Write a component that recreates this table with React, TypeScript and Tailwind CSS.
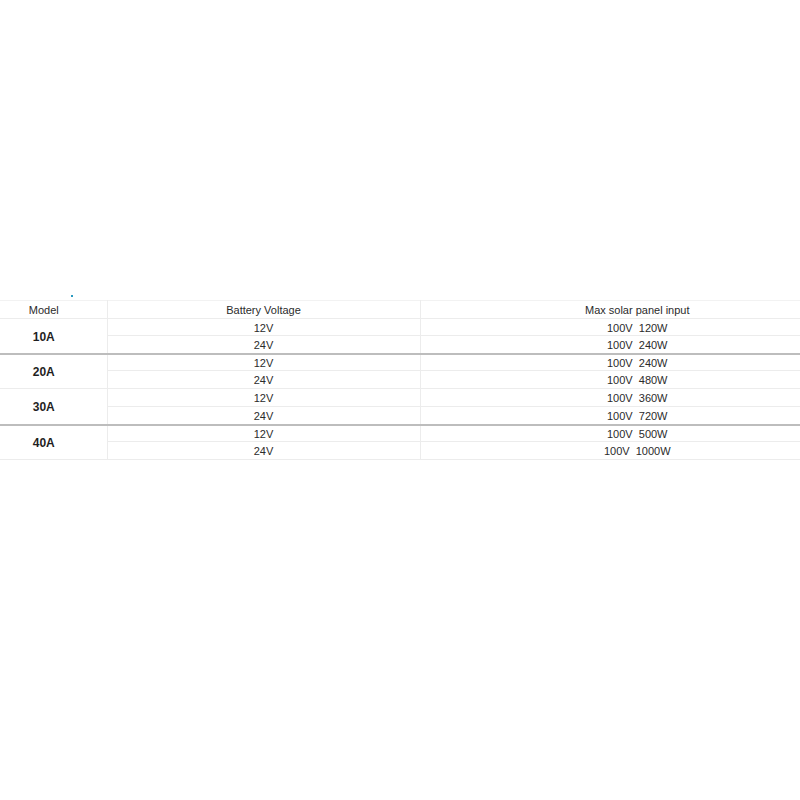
import React from 'react';

const groups = [
  { model: '10A', rows: [['12V', '100V  120W'], ['24V', '100V  240W']] },
  { model: '20A', rows: [['12V', '100V  240W'], ['24V', '100V  480W']] },
  { model: '30A', rows: [['12V', '100V  360W'], ['24V', '100V  720W']] },
  { model: '40A', rows: [['12V', '100V  500W'], ['24V', '100V  1000W']] },
];

// row heights alternate 17/18 to land on the reference grid lines
const rowHeights = [17, 18, 17, 18, 18, 18, 17, 18];

export default function App() {
  return (
    <div className="w-[800px] h-[800px] bg-white overflow-hidden text-[11px] text-[#2b2b2b]" style={{ fontFamily: '"Liberation Sans", Arial, sans-serif' }}>
      <div className="h-[300px] relative">
        <div className="absolute left-[71px] top-[295px] w-[2px] h-[2px] bg-[#2a9ac0]" />
      </div>
      <table className="w-[800px] border-collapse table-fixed">
        <colgroup>
          <col className="w-[107px]" />
          <col className="w-[313px]" />
          <col />
        </colgroup>
        <thead>
          <tr className="h-[18px] border-t border-[#f2f2f2]">
            <td className="p-0 pt-[2px] pr-[19px] text-center border-b border-r border-[#ececec] leading-none">Model</td>
            <td className="p-0 pt-[2px] text-center border-b border-r border-[#ececec] leading-none">Battery Voltage</td>
            <td className="p-0 pt-[2px] pl-[54px] text-center border-b border-[#ececec] leading-none">Max solar panel input</td>
          </tr>
        </thead>
        <tbody>
          {groups.map((g, gi) => {
            const heavy = gi === 0 || gi === 2;
            return g.rows.map((r, ri) => {
              const h = rowHeights[gi * 2 + ri];
              const last = ri === 1;
              const bottom = last && heavy ? 'border-b-2 border-b-[#bdbdbd]' : 'border-b border-b-[#ececec]';
              return (
                <tr key={gi + '-' + ri} style={{ height: h }}>
                  {ri === 0 && (
                    <td rowSpan={2} className={`p-0 pt-[2px] pr-[19px] text-center text-[12px] font-bold text-[#1f1f1f] border-r border-r-[#ececec] leading-none ${heavy ? 'border-b-2 border-b-[#bdbdbd]' : 'border-b border-b-[#ececec]'}`}>
                      {g.model}
                    </td>
                  )}
                  <td className={`p-0 pt-[2px] text-center border-r border-r-[#ececec] leading-none ${bottom}`}>{r[0]}</td>
                  <td className={`p-0 pt-[2px] pl-[54px] text-center whitespace-pre leading-none ${bottom}`}>{r[1]}</td>
                </tr>
              );
            });
          })}
        </tbody>
      </table>
    </div>
  );
}
